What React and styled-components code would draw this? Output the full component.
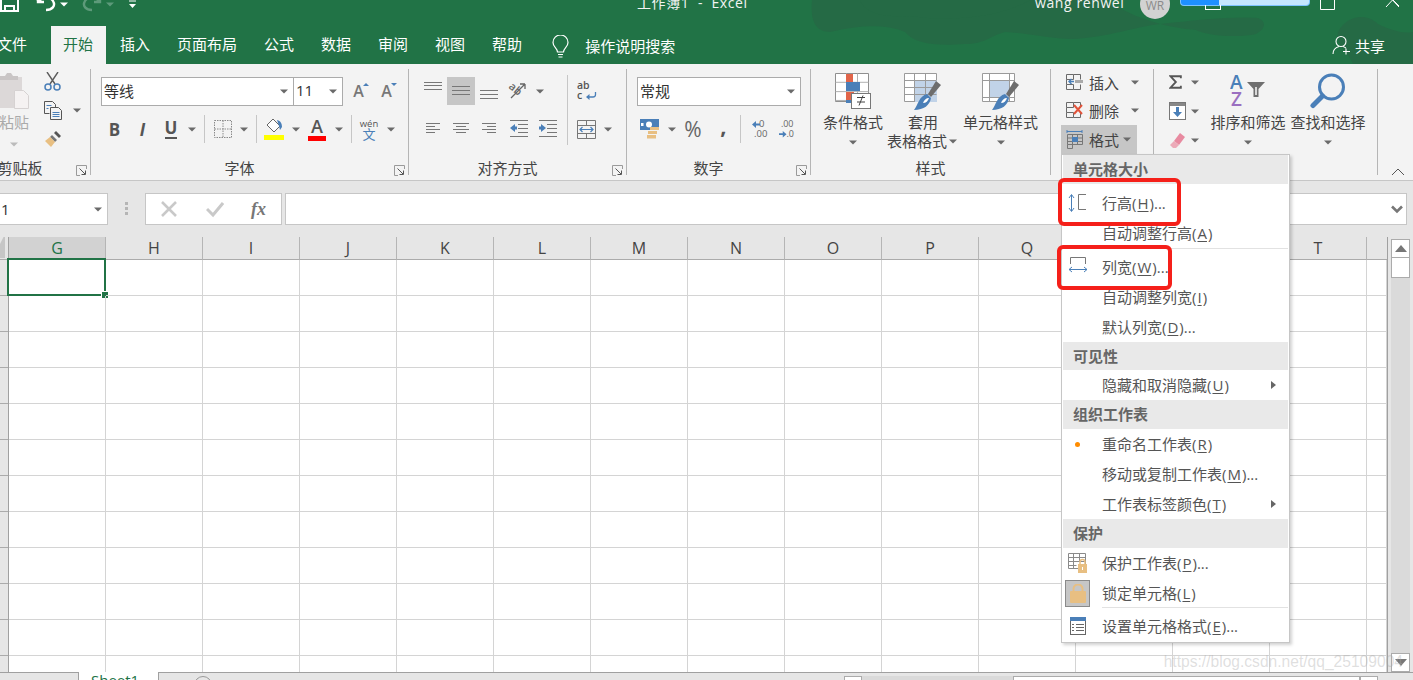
import React from 'react'
import styled, { createGlobalStyle } from 'styled-components'

const GlobalStyle = createGlobalStyle`
    html, body {
        margin: 0;
        width: 1413px;
        height: 680px;
        overflow: hidden;
        background: #e6e6e6;
    }
    * { box-sizing: border-box; }
    #root {
        font-family: "Open Sans", "Noto Sans CJK SC", sans-serif;
        font-size: 15px;
        color: #444;
    }
`

const GREY = '#6a6a6a'
const BLUE = '#4a7fb8'
const ORANGE = '#e8bf82'

/* ---------- icons ---------- */

const Caret = ({ w = 10, color = GREY }) => (
    <CaretSlot $w={w}>
        <svg width="8" height="5" viewBox="0 0 8 5"><path d="M0 0.5h8L4 4.5z" fill={color} /></svg>
    </CaretSlot>
)

const Launcher = () => (
    <svg width="11" height="11" viewBox="0 0 11 11" fill="none">
        <path d="M10.5 4V.5H.5v10H4" stroke="#9a9a9a" />
        <path d="M3.5 3.5L9 9M9.5 5.5v4h-4" stroke="#555" />
    </svg>
)

const SaveIcon = () => (
    <svg width="19" height="12" viewBox="0 0 19 12" fill="none" stroke="#fff" strokeWidth="2">
        <path d="M1 -6h17v17H1z" />
        <path d="M5 11V6h9v5" />
    </svg>
)

const UndoIcon = ({ color = '#fff' }) => (
    <svg width="22" height="12" viewBox="0 0 22 12" fill="none" stroke={color} strokeWidth="2.4">
        <path d="M2 1v-1M3 1c4-4 11-5 14 0s-1 9-7 9" />
        <path d="M2 -4v6h6" />
    </svg>
)

const RedoIcon = ({ color = '#5d9a7a' }) => (
    <svg width="22" height="12" viewBox="0 0 22 12" fill="none" stroke={color} strokeWidth="2.4">
        <path d="M19 1c-4-4-11-5-14 0s1 9 7 9" />
        <path d="M20 -4v6h-6" />
    </svg>
)

const CustomizeIcon = () => (
    <svg width="9" height="9" viewBox="0 0 9 9"><path d="M1 1h7" stroke="#fff" /><path d="M1 4h7L4.5 8z" fill="#fff" /></svg>
)

const BulbIcon = () => (
    <svg width="17" height="23" viewBox="0 0 17 23" fill="none" stroke="#fff" strokeWidth="1.2">
        <path d="M5.5 17c0-4-4.500-5-4.500-9.500a7.500 7.500 0 0 1 15 0C16 12 11.500 13 11.500 17z" />
        <path d="M6 19.500h5M6.500 22h4" />
    </svg>
)

const ShareIcon = () => (
    <svg width="19" height="20" viewBox="0 0 19 20" fill="none" stroke="#fff" strokeWidth="1.1">
        <circle cx="9" cy="6.500" r="5" />
        <path d="M1 19c0-4 2.500-6.500 6-7.500M11 11.500c1 .3 2 .8 2.800 1.500M14 13.500v6M11 16.500h7" />
    </svg>
)

const PasteIcon = () => (
    <svg width="32" height="38" viewBox="0 0 32 38">
        <rect x="0" y="5" width="24" height="31" fill="#dcd8d8" />
        <path d="M2 8V4h5l2-3h4l2 3h5v4z" fill="#c9c5c5" />
        <path d="M16.500 18.500h9l5 5v13h-14z" fill="#f5f2f2" stroke="#d6d2d2" />
    </svg>
)

const ScissorsIcon = () => (
    <svg width="17" height="19" viewBox="0 0 17 19" fill="none">
        <path d="M3 0l8 12M14 0L6 12" stroke="#5c5c5c" strokeWidth="1.400" />
        <circle cx="4" cy="15" r="3" stroke={BLUE} strokeWidth="1.500" />
        <circle cx="13" cy="15" r="3" stroke={BLUE} strokeWidth="1.500" />
    </svg>
)

const CopyIcon = () => (
    <svg width="18" height="19" viewBox="0 0 18 19" fill="none" stroke="#555">
        <path d="M.5.500h8l3 3v4M.5.500v12h5" />
        <path d="M6.500 6.500h8l3 3v9h-11z" fill="#f3f3f3" />
        <path d="M2.500 4.500h5M2.500 7.500h2M8.500 11.500h7M8.500 13.500h7M8.500 15.500h7" stroke={BLUE} />
    </svg>
)

const BrushIcon = () => (
    <svg width="18" height="18" viewBox="0 0 18 18">
        <path d="M10 3l2-2 5 5-2 2z" fill="#555" />
        <path d="M8 5l5 5-2 2-5-5z" fill="#777" />
        <path d="M6 7l5 5-4 5L1 11z" fill={ORANGE} />
    </svg>
)

const BordersIcon = () => (
    <svg width="18" height="18" viewBox="0 0 18 18" stroke="#8a8a8a" strokeDasharray="1.500 1" fill="none">
        <path d="M.5.500h17v17H.5zM.5 9h17M9 .5v17" />
    </svg>
)

const FillIcon = () => (
    <svg width="20" height="22" viewBox="0 0 20 22">
        <path d="M9 1l7 7-6 6-7-7z" fill="#fff" stroke="#666" />
        <path d="M13 2c4 1 5 4 5 7l-2 3-1-4z" fill={BLUE} />
        <rect y="17" width="20" height="5" fill="#ffff00" />
    </svg>
)

const WrapIcon = () => (
    <svg width="20" height="20" viewBox="0 0 20 20" fontFamily="Open Sans" fontSize="10.500" fontWeight="600" fill="#555">
        <text x="0" y="8">ab</text>
        <text x="0" y="18">c</text>
        <path d="M18.500 11v2.500c0 2-1 2.500-2.500 2.500h-6" fill="none" stroke={BLUE} strokeWidth="1.300" />
        <path d="M9 16l3.500-3v6z" fill={BLUE} />
    </svg>
)

const LineIcon = ({ w = 18, h = 28, lines, children }) => (
    <svg width={w} height={h} viewBox={`0 0 ${w} ${h}`} fill="none">
        {lines.map(([x1, x2, y]) => <path key={`${x1}-${y}`} d={`M${x1} ${y + 0.5}H${x2}`} stroke="#777" />)}
        {children}
    </svg>
)

const OrientIcon = () => (
    <svg width="22" height="20" viewBox="0 0 22 20" fill="none">
        <path d="M3 3l14 14M17 17v-5M17 17h-5" stroke="#666" strokeWidth="1.300" transform="rotate(-90 10 10)" />
        <text x="1" y="12" fontFamily="Open Sans" fontSize="11" fontWeight="600" fill="#666" transform="rotate(40 8 8)">ab</text>
    </svg>
)

const MergeIcon = () => (
    <svg width="19" height="19" viewBox="0 0 19 19" fill="none">
        <path d="M.5.500h18v18H.5zM.5 5.500h18M.5 13.500h18M9.500.5v5M9.500 13.500v5" stroke="#777" />
        <path d="M3 9.500h13M5.500 7L3 9.500 5.500 12M13.500 7l2.500 2.500-2.500 2.500" stroke={BLUE} strokeWidth="1.200" />
    </svg>
)

const AccountingIcon = () => (
    <svg width="20" height="20" viewBox="0 0 20 20">
        <rect y="0" width="19" height="11" fill={BLUE} />
        <circle cx="9" cy="5.500" r="3" fill="#fff" />
        <rect x="1" y="4" width="2.500" height="3" fill="#fff" />
        <path d="M10 8h9v3h-9zM8 12h9v3H8zM7 16h9v3.500H7z" fill={ORANGE} />
    </svg>
)

const DecimalIcon = ({ flip }) => (
    <svg width="17" height="20" viewBox="0 0 17 20" fontFamily="Open Sans" fontSize="9.500" fill="#666">
        <text x={flip ? 2 : 7} y="8">{flip ? '.00' : '0'}</text>
        <text x={flip ? 8 : 2} y="18">{flip ? '.0' : '.00'}</text>
        {flip
            ? <path d="M0 14.500h4V12l4 3.500L4 19v-2.500H0z" fill={BLUE} />
            : <path d="M8 4.500H4V2L0 5.500 4 9V6.500h4z" fill={BLUE} />}
    </svg>
)

const ConditionIcon = () => (
    <svg width="37" height="37" viewBox="0 0 37 37">
        <path d="M.5.500h33v28H.5z" fill="#fff" stroke="#8f8f8f" />
        <path d="M.5 9.500h33M.5 19h33M.5 28h33M11.500.5v30M22.500.5v30" stroke="#b0b0b0" transform="scale(1 .98)" />
        <path d="M11 1h7v8h-7zM11 19h8v8h-8z" fill="#e1654a" />
        <path d="M11 9h14v9H11zM11 27h6v3h-6z" fill={BLUE} />
        <rect x="16.500" y="20.500" width="19" height="15" fill="#fff" stroke="#777" />
        <path d="M22 24.500h8M22 29h8M28 22.500l-4 10" stroke="#444" />
    </svg>
)

const TableStyleIcon = ({ single }) => (
    <svg width="38" height="38" viewBox="0 0 38 38">
        <path d="M.5.500h32v28H.5z" fill="#fff" stroke="#9a9a9a" />
        {single
            ? <path d="M8 7h20v17H8z" fill="#c1d3e8" />
            : <path d="M11 7h22v22H11z" fill="#c1d3e8" />}
        {single
            ? <path d="M.5 7.500h32M.5 24.500h32M7.500.5v28M27.500.5v28" stroke="#9a9a9a" fill="none" />
            : <path d="M.5 7.500h32M.5 14.500h32M.5 21.500h32M10.500.5v28M21.500.5v28" stroke="#9a9a9a" fill="none" />}
        <path d="M32 8l5 4-10 12-3-3z" fill="#6d6d6d" />
        <path d="M23 21l4 4c-1 7-7 12-17 12 4-5 5-14 13-16z" fill={BLUE} />
        <path d="M19 30c1-3 3-5 6-5-1 3-3 5-6 5z" fill="#fff" />
    </svg>
)

const CellGrid = () => <path d="M.5.500h7v5h-7zM7.500.5h7v5M.5 5.500v5h7M.5 10.500v5h7v-5M7.500 15.500h7v-5" stroke="#6a6a6a" fill="none" />

const InsertIcon = () => (
    <svg width="18" height="18" viewBox="0 0 18 18">
        <g transform="translate(0 1)"><CellGrid /></g>
        <path d="M9 7h8v3H9z" fill="#aaa" />
        <path d="M8 8.500H3M5.500 6L3 8.500 5.500 11" stroke={BLUE} strokeWidth="1.400" fill="none" />
    </svg>
)

const DeleteIcon = () => (
    <svg width="18" height="18" viewBox="0 0 18 18">
        <g transform="translate(0 1)"><CellGrid /></g>
        <path d="M8 4l8 9M16 4l-8 9" stroke="#e2533a" strokeWidth="2" />
    </svg>
)

const FormatIcon = () => (
    <svg width="18" height="19" viewBox="0 0 18 19" fill="none">
        <path d="M1 1.500h15M1 0v3M16 0v3" stroke={BLUE} />
        <path d="M1.500 4.500h15v10h-15zM1.500 8h15M1.500 11.500h15M6.500 4.500v14h-5v-4M11.500 4.500v10" stroke="#777" />
        <rect x="6" y="7" width="6" height="5" fill={BLUE} />
    </svg>
)

const SigmaIcon = () => (
    <svg width="17" height="18" viewBox="0 0 17 18" fill="none">
        <path d="M15.500 4V1.500H2L9 9l-7 7.500h13.500V14" stroke="#555" strokeWidth="2.400" />
    </svg>
)

const FillDownIcon = () => (
    <svg width="17" height="18" viewBox="0 0 17 18">
        <rect x=".5" y=".5" width="16" height="17" fill="#fff" stroke="#777" />
        <rect x="1" y="1" width="15" height="3" fill="#888" />
        <path d="M7 5h3v5h3l-4.500 5L4 10h3z" fill={BLUE} />
    </svg>
)

const EraserIcon = () => (
    <svg width="17" height="17" viewBox="0 0 17 17">
        <path d="M11 1l5 4-6 8-5-4z" fill="#e88aa0" />
        <path d="M5 9l5 4-3 3H4l-3-3z" fill="#ecaab8" />
    </svg>
)

const SortIcon = () => (
    <svg width="36" height="37" viewBox="0 0 36 37" fontFamily="Open Sans" fontWeight="600" fontSize="19">
        <text x="0" y="16" fill={BLUE}>A</text>
        <text x="1" y="33" fill="#9a6fc0">Z</text>
        <path d="M17 9h18l-6.500 7v8h-5v-8z" fill="#6f6f6f" />
        <path d="M25 14h2v8h-2z" fill="#d9d9d9" />
    </svg>
)

const SearchIcon = () => (
    <svg width="36" height="36" viewBox="0 0 36 36" fill="none">
        <circle cx="21.500" cy="14" r="12" stroke={BLUE} strokeWidth="3" />
        <path d="M12.500 23L3 32.500" stroke={BLUE} strokeWidth="5" strokeLinecap="round" />
    </svg>
)

const RowHeightIcon = () => (
    <svg width="20" height="20" viewBox="0 0 20 20" fill="none">
        <path d="M3.500 2v16M1 5l2.500-3.500L6 5M1 15l2.500 3.500L6 15" stroke={BLUE} />
        <path d="M18 1.500H10.500v15H18" stroke="#777" />
    </svg>
)

const ColWidthIcon = () => (
    <svg width="20" height="20" viewBox="0 0 20 20" fill="none">
        <path d="M2.500 7V.5h15V7" stroke="#777" />
        <path d="M1 12.500h18M4 10l-3 2.500L4 15M16 10l3 2.500-3 2.500" stroke={BLUE} />
    </svg>
)

const ProtectIcon = () => (
    <svg width="20" height="20" viewBox="0 0 20 20" fill="none">
        <path d="M.5.500h17v15H.5zM.5 4.500h17M.5 8.500h17M.5 12.500h8M5.500.5v15M11.500.5v8" stroke="#8a8a8a" />
        <rect x="10" y="11" width="9" height="9" fill={ORANGE} />
        <path d="M12 11V9a2.500 2.500 0 0 1 5 0v2" stroke={ORANGE} strokeWidth="1.500" />
        <path d="M14.500 14v3" stroke="#fff" />
    </svg>
)

const LockIcon = () => (
    <svg width="16" height="19" viewBox="0 0 16 19" fill="none">
        <rect y="7" width="16" height="12" rx="1" fill={ORANGE} />
        <path d="M3.500 8V5a4.500 4.500 0 0 1 9 0v3" stroke={ORANGE} strokeWidth="2" />
    </svg>
)

const FormatCellsIcon = () => (
    <svg width="16" height="18" viewBox="0 0 16 18" fill="none">
        <rect x=".5" y=".5" width="15" height="17" stroke="#666" fill="#fff" />
        <rect width="16" height="4" fill={BLUE} />
        <path d="M2 7.500h2M6 7.500h8M2 10.500h2M6 10.500h8M2 13.500h2M6 13.500h8" stroke="#666" />
    </svg>
)

/* ---------- data ---------- */

const COLUMNS = ['G', 'H', 'I', 'J', 'K', 'L', 'M', 'N', 'O', 'P', 'Q', 'R', 'S', 'T', '']
const ROWS = Array.from({ length: 12 }, (_, i) => i)

const Item = ({ icon, arrow, label, hot, tail = '' }) => (
    <MenuItem>
        <MenuIcon>{icon}</MenuIcon>
        <span>{label}(<u>{hot}</u>){tail}</span>
        {arrow && <MenuArrow />}
    </MenuItem>
)

/* ---------- page ---------- */

function App() {
    return (
        <Page>
            <GlobalStyle />
            <Header>
                <HeaderArt viewBox="0 0 1413 64" width="1413" height="64">
                    <path d="M812 0c-2 20 3 32 18 32 30-7 55-8 75 0 10 12 30 14 60 12 20 0 25-8 40-12 35 2 55 10 80 6 35-4 45-10 75-14 35-4 75-8 98-6 10 4 6 12-2 16-16 4-50 2-60-4-25-2-60-10-90-30z" fill="#256a45" />
                    <path d="M860 0c5 12 20 18 50 16 40 6 90 2 120-16z" fill="#256a45" />
                    <path d="M1338 32c8-16 28-20 40-8 12 6 25 10 35 8v32h-60c-4-12-18-18-15-32z" fill="#256a45" />
                </HeaderArt>
                <TitleBar>
                    <QuickAccess>
                        <SaveIcon />
                        <QatItem $m={17}><UndoIcon /></QatItem>
                        <Caret w={12} color="#fff" />
                        <QatItem $m={10}><RedoIcon /></QatItem>
                        <QatItem $m={2}><Caret w={12} color="#5d9a7a" /></QatItem>
                        <QatItem $m={12}><CustomizeIcon /></QatItem>
                    </QuickAccess>
                    <ClippedText>工作簿1&nbsp; -&nbsp; Excel</ClippedText>
                    <AccountArea>
                        <UserName>wang renwei</UserName>
                        <Avatar>WR</Avatar>
                        <BlueBar />
                        <WindowButton>
                            <svg width="15" height="10" viewBox="0 0 15 10" fill="none"><path d="M.5 -2v11.500h14V-2" stroke="#fff" /></svg>
                        </WindowButton>
                        <WindowButton>
                            <svg width="15" height="8" viewBox="0 0 15 8" fill="none"><path d="M7.500 0L1 7M7.500 0L14 7M1 -7l13 13" stroke="#fff" /></svg>
                        </WindowButton>
                    </AccountArea>
                </TitleBar>
                <TabBar>
                    <FileTab>文件</FileTab>
                    <Tab $active>开始</Tab>
                    <Tab>插入</Tab>
                    <Tab>页面布局</Tab>
                    <Tab>公式</Tab>
                    <Tab>数据</Tab>
                    <Tab>审阅</Tab>
                    <Tab>视图</Tab>
                    <Tab>帮助</Tab>
                    <SearchHint><BulbIcon /><span>操作说明搜索</span></SearchHint>
                    <ShareButton><ShareIcon /><span>共享</span></ShareButton>
                </TabBar>
            </Header>

            <Ribbon>
                <Group $w={121}>
                    <ClipboardBody>
                        <PasteColumn>
                            <PasteIcon />
                            <PasteLabel>粘贴</PasteLabel>
                            <Caret w={32} color="#bbb" />
                        </PasteColumn>
                        <ClipTools>
                            <ScissorsIcon />
                            <ToolRow><CopyIcon /><Caret w={30} /></ToolRow>
                            <BrushIcon />
                        </ClipTools>
                    </ClipboardBody>
                    <Footer><FooterLabel>剪贴板</FooterLabel><LauncherSlot><Launcher /></LauncherSlot></Footer>
                </Group>

                <Group $w={318}>
                    <Stack>
                        <ToolRow>
                            <Combo $w={193}><span>等线</span><Caret /></Combo>
                            <Combo $w={49} $joined><span>11</span><Caret /></Combo>
                            <Tool $w={31}><SizeLetter>A<SizeMark $up /></SizeLetter></Tool>
                            <Tool $w={25}><SizeLetter>A<SizeMark /></SizeLetter></Tool>
                        </ToolRow>
                        <ToolRow>
                            <Tool $w={27}><StyleLetter $bold>B</StyleLetter></Tool>
                            <Tool $w={29}><StyleLetter $italic>I</StyleLetter></Tool>
                            <Tool $w={28}><StyleLetter $under>U</StyleLetter></Tool>
                            <Caret w={14} />
                            <Divider $m={5} />
                            <Tool $w={35}><BordersIcon /></Tool>
                            <Caret w={8} />
                            <Divider $m={8} />
                            <Tool $w={34}><FillIcon /></Tool>
                            <Caret w={10} />
                            <Tool $w={32}><ColorLetter>A</ColorLetter></Tool>
                            <Caret w={12} />
                            <Divider $m={6} />
                            <Tool $w={34}><PhoneticGlyph><small>wén</small><b>文</b></PhoneticGlyph></Tool>
                            <Caret w={10} />
                        </ToolRow>
                    </Stack>
                    <Footer><FooterLabel>字体</FooterLabel><LauncherSlot><Launcher /></LauncherSlot></Footer>
                </Group>

                <Group $w={218}>
                    <AlignBody>
                        <AlignColumn>
                            <ToolRow>
                                <Tool $w={28}><LineIcon lines={[[0, 18, 5], [0, 18, 8], [0, 18, 12]]} /></Tool>
                                <Tool $w={28} $on><LineIcon lines={[[0, 18, 9], [0, 18, 13], [0, 18, 17]]} /></Tool>
                                <Tool $w={28}><LineIcon lines={[[0, 18, 13], [0, 18, 17], [0, 18, 21]]} /></Tool>
                                <Tool $w={32}><OrientIcon /></Tool>
                                <Caret w={10} />
                            </ToolRow>
                            <ToolRow>
                                <Tool $w={28}><LineIcon w={14} lines={[[0, 14, 8], [0, 9, 11], [0, 14, 14], [0, 9, 17]]} /></Tool>
                                <Tool $w={28}><LineIcon w={16} lines={[[0, 16, 8], [3, 13, 11], [0, 16, 14], [3, 13, 17]]} /></Tool>
                                <Tool $w={28}><LineIcon w={14} lines={[[0, 14, 8], [5, 14, 11], [0, 14, 14], [5, 14, 17]]} /></Tool>
                                <Tool $w={32}>
                                    <LineIcon lines={[[0, 18, 5], [8, 18, 9], [8, 18, 13], [8, 18, 17], [0, 18, 21]]}>
                                        <path d="M0 13l5-4v2.500h2v3H5V17z" fill={BLUE} />
                                    </LineIcon>
                                </Tool>
                                <Tool $w={25}>
                                    <LineIcon lines={[[0, 18, 5], [8, 18, 9], [8, 18, 13], [8, 18, 17], [0, 18, 21]]}>
                                        <path d="M7 13L2 9v2.500H0v3h2V17z" fill={BLUE} />
                                    </LineIcon>
                                </Tool>
                            </ToolRow>
                        </AlignColumn>
                        <Divider $m={0} $tall />
                        <AlignColumn>
                            <ToolRow><Tool $w={38}><WrapIcon /></Tool></ToolRow>
                            <ToolRow><Tool $w={36}><MergeIcon /></Tool><Caret w={8} /></ToolRow>
                        </AlignColumn>
                    </AlignBody>
                    <Footer><FooterLabel>对齐方式</FooterLabel><LauncherSlot><Launcher /></LauncherSlot></Footer>
                </Group>

                <Group $w={184}>
                    <Stack>
                        <ToolRow><Combo $w={164}><span>常规</span><Caret /></Combo></ToolRow>
                        <ToolRow>
                            <Tool $w={26}><AccountingIcon /></Tool>
                            <Caret w={18} />
                            <Tool $w={24}><PercentGlyph>%</PercentGlyph></Tool>
                            <Tool $w={34}><CommaGlyph>,</CommaGlyph></Tool>
                            <Divider $m={1} />
                            <Tool $w={38}><DecimalIcon /></Tool>
                            <Tool $w={16}><DecimalIcon flip /></Tool>
                        </ToolRow>
                    </Stack>
                    <Footer><FooterLabel>数字</FooterLabel><LauncherSlot><Launcher /></LauncherSlot></Footer>
                </Group>

                <Group $w={240}>
                    <BigRow $pad={10}>
                        <BigButton $w={64}><BigIcon><ConditionIcon /></BigIcon><BigText>条件格式</BigText><Caret /></BigButton>
                        <BigButton $w={76}><BigIcon><TableStyleIcon /></BigIcon><BigText>套用</BigText><BigText>表格格式<Caret w={12} /></BigText></BigButton>
                        <BigButton $w={79}><BigIcon><TableStyleIcon single /></BigIcon><BigText>单元格样式</BigText><Caret /></BigButton>
                    </BigRow>
                    <Footer $plain><FooterLabel>样式</FooterLabel></Footer>
                </Group>

                <Group $w={103}>
                    <CellsColumn>
                        <CellsRow><InsertIcon /><span>插入</span><Caret w={32} /></CellsRow>
                        <CellsRow><DeleteIcon /><span>删除</span><Caret w={32} /></CellsRow>
                        <CellsRow $on><FormatIcon /><span>格式</span><Caret w={16} /></CellsRow>
                    </CellsColumn>
                </Group>

                <Group $w={224}>
                    <BigRow $pad={0}>
                        <EditColumn>
                            <ToolRow><SigmaIcon /><Caret w={26} /></ToolRow>
                            <ToolRow><FillDownIcon /><Caret w={18} /></ToolRow>
                            <ToolRow><EraserIcon /><Caret w={18} /></ToolRow>
                        </EditColumn>
                        <BigButton $w={80}><BigIcon><SortIcon /></BigIcon><BigText>排序和筛选</BigText><Caret /></BigButton>
                        <BigButton $w={80}><BigIcon><SearchIcon /></BigIcon><BigText>查找和选择</BigText><Caret /></BigButton>
                    </BigRow>
                </Group>

                <CollapseButton>
                    <svg width="14" height="8" viewBox="0 0 14 8" fill="none"><path d="M1 7l6-6 6 6" stroke="#555" /></svg>
                </CollapseButton>
            </Ribbon>

            <FormulaBar>
                <NameBox><span>1</span><Caret w={18} /></NameBox>
                <Grip />
                <FormulaButtons>
                    <svg width="18" height="18" viewBox="0 0 18 18" fill="none"><path d="M2 2l14 14M16 2L2 16" stroke="#c9c9c9" strokeWidth="2.600" /></svg>
                    <svg width="18" height="18" viewBox="0 0 18 18" fill="none"><path d="M1 9l6 6L17 3" stroke="#c9c9c9" strokeWidth="3" /></svg>
                    <FxGlyph>fx</FxGlyph>
                </FormulaButtons>
                <FormulaInput>
                    <svg width="14" height="9" viewBox="0 0 14 9" fill="none"><path d="M2 1.500l5 5 5-5" stroke="#777" strokeWidth="2.600" /></svg>
                </FormulaInput>
            </FormulaBar>

            <Workbook>
                <RowHeader>
                    <Corner />
                    {ROWS.map(r => <RowStub key={r} />)}
                </RowHeader>
                <Sheet>
                    <SheetGrid>
                        {COLUMNS.map((c, i) => <ColumnHead key={c || 'U'} $on={i === 0}>{c}</ColumnHead>)}
                        {ROWS.flatMap(r => COLUMNS.map((c, i) => (
                            <Cell key={`${r}-${i}`} $selected={r === 0 && i === 0} />
                        )))}
                    </SheetGrid>
                </Sheet>
                <VerticalScroll>
                    <ScrollButton>
                        <svg width="12" height="7" viewBox="0 0 12 7"><path d="M6 0l6 7H0z" fill="#777" /></svg>
                    </ScrollButton>
                    <ScrollThumb />
                    <ScrollTrack />
                    <ScrollButton>
                        <svg width="12" height="7" viewBox="0 0 12 7"><path d="M0 0h12L6 7z" fill="#777" /></svg>
                    </ScrollButton>
                </VerticalScroll>
            </Workbook>

            <SheetBar>
                <SheetTab>Sheet1</SheetTab>
                <AddSheet />
                <HScroll>
                    <HScrollEnd />
                    <HScrollTrack />
                    <HScrollThumb />
                    <HScrollEnd />
                </HScroll>
            </SheetBar>

            <Menu>
                <MenuHead>单元格大小</MenuHead>
                <MenuSection $top={4}>
                    <Item icon={<RowHeightIcon />} label="行高" hot="H" tail="..." />
                    <Item label="自动调整行高" hot="A" />
                </MenuSection>
                <MenuRule />
                <MenuSection $top={3}>
                    <Item icon={<ColWidthIcon />} label="列宽" hot="W" tail="..." />
                    <Item label="自动调整列宽" hot="I" />
                    <Item label="默认列宽" hot="D" tail="..." />
                </MenuSection>
                <MenuHead $h={28}>可见性</MenuHead>
                <Item label="隐藏和取消隐藏" hot="U" arrow />
                <MenuHead>组织工作表</MenuHead>
                <Item icon={<OrangeDot />} label="重命名工作表" hot="R" />
                <Item label="移动或复制工作表" hot="M" tail="..." />
                <Item label="工作表标签颜色" hot="T" arrow />
                <MenuHead>保护</MenuHead>
                <Item icon={<ProtectIcon />} label="保护工作表" hot="P" tail="..." />
                <Item icon={<LockBox><LockIcon /></LockBox>} label="锁定单元格" hot="L" />
                <MenuRule $inset />
                <MenuSection $top={3}>
                    <Item icon={<FormatCellsIcon />} label="设置单元格格式" hot="E" tail="..." />
                </MenuSection>
            </Menu>

            <RedFrame $x={1058} $y={178} $w={123} $h={48} />
            <RedFrame $x={1057} $y={245} $w={115} $h={45} />
            <Watermark>https://blog.csdn.net/qq_25109004</Watermark>
        </Page>
    )
}

export default App

/* ---------- styles ---------- */

const Page = styled.div`
    position: relative;
    width: 1413px;
    height: 680px;
    overflow: hidden;
    background: #e6e6e6;
`

const Header = styled.header`
    position: relative;
    height: 64px;
    background: #217346;
    color: #fff;
    overflow: hidden;
`

const HeaderArt = styled.svg`
    position: absolute;
    inset: 0;
`

const TitleBar = styled.div`
    position: relative;
    display: flex;
    align-items: flex-start;
    height: 24px;
    overflow: hidden;
`

const QuickAccess = styled.div`
    display: flex;
    align-items: flex-start;
    width: 637px;
    flex: none;
    & > span { height: 8px; }
`

const QatItem = styled.div`
    display: flex;
    align-items: flex-start;
    margin-left: ${p => p.$m}px;
    span { height: 8px; }
`

const ClippedText = styled.span`
    margin-top: -7px;
    line-height: 20px;
    font-size: 14px;
    letter-spacing: .6px;
    white-space: nowrap;
    color: #f3f3f3;
`

const UserName = styled(ClippedText)`
    flex: none;
    width: 92px;
`

const AccountArea = styled.div`
    display: flex;
    align-items: flex-start;
    position: absolute;
    left: 1035px;
    top: 0;
`

const Avatar = styled.div`
    flex: none;
    width: 30px;
    height: 30px;
    margin: -11px 0 0 13px;
    padding-top: 9px;
    border-radius: 50%;
    background: #d2d2d2;
    color: #8b8b8b;
    font-size: 12px;
    line-height: 16px;
    text-align: center;
`

const BlueBar = styled.div`
    position: relative;
    flex: none;
    width: 130px;
    height: 6px;
    margin-left: 10px;
    border-radius: 0 0 4px 4px;
    background: linear-gradient(90deg, #1e90ff 0 38px, #c4e6ff 38px);
    border: 1px solid #7cc2ff;
    border-top: 0;
    &::after {
        content: '';
        position: absolute;
        left: 24px;
        top: 5px;
        width: 14px;
        height: 4px;
        border: 1px solid #fff;
        border-top: 0;
    }
`

const WindowButton = styled.div`
    display: flex;
    flex: none;
    margin-left: 10px;
    width: 15px;
    & + & { margin-left: 50px; }
`

const TabBar = styled.nav`
    position: relative;
    display: flex;
    align-items: flex-end;
    height: 40px;
`

const Tab = styled.div`
    height: 38px;
    margin: 0 1px;
    padding: 0 13px 0 12px;
    line-height: 36px;
    white-space: nowrap;
    color: ${p => (p.$active ? '#217346' : '#fff')};
    background: ${p => (p.$active ? '#f3f3f3' : 'transparent')};
`

const FileTab = styled(Tab)`
    margin: 0 0 0 -3px;
    padding: 0 23px 0 0;
    width: 53px;
`

const SearchHint = styled.div`
    display: flex;
    align-items: center;
    gap: 16px;
    height: 38px;
    margin-left: 16px;
    white-space: nowrap;
    svg { margin-top: 2px; }
`

const ShareButton = styled.div`
    display: flex;
    align-items: center;
    gap: 4px;
    height: 38px;
    margin-left: auto;
    margin-right: 28px;
    white-space: nowrap;
`

const Ribbon = styled.div`
    display: flex;
    align-items: flex-start;
    height: 117px;
    padding-top: 5px;
    background: #f3f3f3;
    border-bottom: 1px solid #c6c6c6;
`

const Group = styled.section`
    display: flex;
    flex-direction: column;
    flex: none;
    width: ${p => p.$w}px;
    height: 106px;
    border-right: 1px solid #b5b5b5;
    &:first-child { margin-left: -30px; }
`

const Footer = styled.div`
    display: flex;
    height: 12px;
    margin-top: auto;
    align-items: center;
    color: #444;
`

const FooterLabel = styled.div`
    flex: 1;
    text-align: center;
    line-height: 10px;
    padding-bottom: 2px;
    white-space: nowrap;
`

const LauncherSlot = styled.div`
    display: flex;
    align-items: center;
    justify-content: flex-start;
    width: 20px;
    padding-left: 6px;
    margin-top: 3px;
`

const CaretSlot = styled.span`
    display: inline-flex;
    align-items: center;
    justify-content: center;
    flex: none;
    width: ${p => p.$w}px;
    height: 20px;
`

const ClipboardBody = styled.div`
    display: flex;
    height: 94px;
    padding-left: 28px;
`

const PasteColumn = styled.div`
    display: flex;
    flex-direction: column;
    width: 40px;
    padding-top: 3px;
`

const PasteLabel = styled.div`
    width: 32px;
    line-height: 24px;
    color: #aaa;
    text-align: center;
`

const ClipTools = styled.div`
    display: flex;
    flex-direction: column;
    gap: 10px;
    padding: 3px 0 0 14px;
`

const Stack = styled.div`
    display: flex;
    flex-direction: column;
    gap: 10px;
    height: 94px;
    padding: 8px 0 0 10px;
`

const ToolRow = styled.div`
    display: flex;
    align-items: center;
    height: 28px;
    ${ClipTools} & { height: 19px; }
`

const Tool = styled.div`
    display: flex;
    align-items: center;
    justify-content: center;
    flex: none;
    width: ${p => p.$w}px;
    height: 28px;
    background: ${p => (p.$on ? '#c6c6c6' : 'transparent')};
`

const Combo = styled.div`
    display: flex;
    align-items: center;
    justify-content: space-between;
    flex: none;
    width: ${p => p.$w}px;
    height: 29px;
    padding: 0 4px 2px 2px;
    background: #fff;
    border: 1px solid #ababab;
    border-left-width: ${p => (p.$joined ? 0 : 1)}px;
    color: #333;
    & > span:last-child { margin-top: 2px; }
`

const Divider = styled.div`
    flex: none;
    width: 1px;
    height: ${p => (p.$tall ? 70 : 28)}px;
    margin-left: ${p => p.$m}px;
    background: #c6c6c6;
`

const SizeLetter = styled.span`
    position: relative;
    font-size: 16px;
    font-weight: 600;
    color: #777;
`

const SizeMark = styled.i`
    position: absolute;
    right: -5px;
    top: 3px;
    border: 3.5px solid transparent;
    border-bottom-color: ${p => (p.$up ? BLUE : 'transparent')};
    border-top-color: ${p => (p.$up ? 'transparent' : BLUE)};
    margin-top: ${p => (p.$up ? -3 : 0)}px;
`

const StyleLetter = styled.span`
    font-size: 17px;
    font-family: "Open Sans", sans-serif;
    font-weight: 700;
    font-style: ${p => (p.$italic ? 'italic' : 'normal')};
    color: #555;
    ${p => p.$under && 'border-bottom: 2px solid #555; line-height: 18px;'}
`

const ColorLetter = styled.span`
    font-size: 18px;
    font-weight: 600;
    line-height: 19px;
    color: #555;
    border-bottom: 5px solid #f00;
    padding: 0 3px;
`

const PhoneticGlyph = styled.span`
    display: flex;
    flex-direction: column;
    align-items: center;
    line-height: 11px;
    small { font-size: 9.5px; color: #555; }
    b { font-size: 13px; font-weight: 400; color: ${BLUE}; }
`

const AlignBody = styled.div`
    display: flex;
    height: 94px;
    padding-left: 10px;
    align-items: flex-start;
    ${Divider} { margin-top: 6px; }
`

const AlignColumn = styled.div`
    display: flex;
    flex-direction: column;
    gap: 10px;
    padding-top: 8px;
    &:first-child { width: 148px; }
`

const PercentGlyph = styled.span`
    font-size: 21px;
    line-height: 26px;
    color: #666;
`

const CommaGlyph = styled.span`
    font-size: 22px;
    font-weight: 700;
    line-height: 12px;
    margin: 0 0 8px 3px;
    color: #555;
`

const BigRow = styled.div`
    display: flex;
    height: 94px;
    padding: 4px 0 0 ${p => p.$pad}px;
`

const BigButton = styled.div`
    display: flex;
    flex-direction: column;
    align-items: center;
    flex: none;
    width: ${p => p.$w}px;
    white-space: nowrap;
`

const BigIcon = styled.div`
    display: flex;
    height: 37px;
    margin-bottom: 3px;
`

const BigText = styled.div`
    display: flex;
    align-items: center;
    height: 19px;
    line-height: 19px;
`

const CellsColumn = styled.div`
    display: flex;
    flex-direction: column;
    gap: 2px;
    width: 76px;
    margin-left: 10px;
`

const CellsRow = styled.div`
    display: flex;
    align-items: center;
    gap: 5px;
    height: ${p => (p.$on ? 29 : 26)}px;
    padding-left: 5px;
    background: ${p => (p.$on ? '#c6c6c6' : 'transparent')};
    white-space: nowrap;
    & > * { flex: none; }
    & > span:last-child { margin-left: -5px; }
`

const EditColumn = styled.div`
    display: flex;
    flex-direction: column;
    gap: 1px;
    width: 54px;
    padding-left: 15px;
    margin-top: -5px;
    ${ToolRow} { height: 28px; }
`

const CollapseButton = styled.div`
    display: flex;
    align-self: flex-end;
    padding: 0 0 4px 13px;
`

const FormulaBar = styled.div`
    display: flex;
    align-items: flex-start;
    height: 56px;
    padding-top: 12px;
`

const NameBox = styled.div`
    display: flex;
    align-items: center;
    justify-content: space-between;
    width: 112px;
    height: 32px;
    margin-left: -4px;
    padding-left: 4px;
    background: #fff;
    border: 1px solid #c6c6c6;
    color: #333;
`

const Grip = styled.div`
    width: 3px;
    height: 13px;
    margin: 9px 17px 0 17px;
    background: repeating-linear-gradient(#b5b5b5 0 3px, transparent 3px 5px);
`

const FormulaButtons = styled.div`
    display: flex;
    align-items: center;
    justify-content: space-between;
    width: 137px;
    height: 32px;
    padding: 0 15px 0 14px;
    background: #fff;
    border: 1px solid #c6c6c6;
`

const FxGlyph = styled.span`
    font-family: "Liberation Serif", serif;
    font-style: italic;
    font-weight: 700;
    font-size: 18px;
    color: #777;
`

const FormulaInput = styled.div`
    display: flex;
    align-items: center;
    justify-content: flex-end;
    flex: none;
    width: 1122px;
    height: 32px;
    margin-left: 3px;
    padding-right: 2px;
    background: #fff;
    border: 1px solid #c6c6c6;
`

const Workbook = styled.div`
    display: flex;
    height: 435px;
    overflow: hidden;
`

const RowHeader = styled.div`
    flex: none;
    width: 9px;
    height: 100%;
    overflow: hidden;
    border-right: 1px solid #a0a0a0;
`

const Corner = styled.div`
    height: 23px;
    border-bottom: 1px solid #ababab;
    position: relative;
    &::after {
        content: '';
        position: absolute;
        right: 3px;
        bottom: 1px;
        border: 8px solid transparent;
        border-right-color: #c6c6c6;
        border-bottom-color: #c6c6c6;
        border-left-width: 0;
        border-top-width: 16px;
    }
`

const RowStub = styled.div`
    height: 36px;
    border-bottom: 1px solid #ababab;
`

const Sheet = styled.div`
    flex: none;
    width: 1379px;
    height: 100%;
    background: #fff;
    border-right: 1px solid #a0a0a0;
`

const SheetGrid = styled.div`
    display: grid;
    grid-template-columns: repeat(14, 97px) 1fr;
    grid-auto-rows: 36px;
    grid-template-rows: 23px;
`

const ColumnHead = styled.div`
    display: flex;
    align-items: center;
    justify-content: center;
    background: ${p => (p.$on ? '#d2d2d2' : '#e6e6e6')};
    border-right: 1px solid #b5b5b5;
    border-bottom: 1px solid ${p => (p.$on ? '#217346' : '#ababab')};
    color: ${p => (p.$on ? '#217346' : '#444')};
    font-size: 16px;
    padding-bottom: 1px;
    &:nth-child(15) { border-right: 0; }
`

const Cell = styled.div`
    position: relative;
    border-right: 1px solid #d4d4d4;
    border-bottom: 1px solid #d4d4d4;
    ${p => p.$selected && `
        &::before {
            content: '';
            position: absolute;
            inset: -2px -1px -1px -2px;
            border: 2px solid #217346;
        }
        &::after {
            content: '';
            position: absolute;
            right: -3px;
            bottom: -3px;
            width: 6px;
            height: 6px;
            background: #217346;
            border: 1px solid #fff;
            box-sizing: content-box;
            margin: -1px;
        }
    `}
`

const VerticalScroll = styled.div`
    display: flex;
    flex-direction: column;
    flex: none;
    width: 19px;
    height: 100%;
    margin-left: 3px;
    padding-top: 2px;
`

const ScrollButton = styled.div`
    display: flex;
    align-items: center;
    justify-content: center;
    flex: none;
    height: 19px;
    background: #fff;
    border: 1px solid #ababab;
`

const ScrollThumb = styled.div`
    flex: none;
    height: 20px;
    background: #fff;
    border: 1px solid #ababab;
    border-top: 0;
`

const ScrollTrack = styled.div`
    flex: 1;
    background: #dadada;
`

const SheetBar = styled.div`
    display: flex;
    align-items: flex-start;
    height: 8px;
    border-top: 1px solid #a0a0a0;
    overflow: visible;
`

const SheetTab = styled.div`
    width: 81px;
    height: 12px;
    margin: -1px 0 0 78px;
    padding-left: 12px;
    background: #fff;
    border-left: 1px solid #a0a0a0;
    border-right: 1px solid #a0a0a0;
    color: #217346;
    font-size: 15px;
    line-height: 12px;
    padding-top: 2px;
    overflow: hidden;
`

const AddSheet = styled.div`
    width: 18px;
    height: 18px;
    margin: 3px 0 0 35px;
    border: 1px solid #999;
    border-radius: 50%;
`

const HScroll = styled.div`
    display: flex;
    height: 8px;
    margin-left: 632px;
    margin-top: 3px;
`

const HScrollEnd = styled.div`
    width: 18px;
    background: #fff;
    border: 1px solid #ababab;
`

const HScrollTrack = styled.div`
    width: 151px;
    background: #dadada;
`

const HScrollThumb = styled.div`
    width: 347px;
    background: #fff;
    border: 1px solid #ababab;
`

const Menu = styled.div`
    position: absolute;
    left: 1061px;
    top: 154px;
    width: 229px;
    height: 489px;
    padding: 0 1px;
    background: #fff;
    border: 1px solid #c6c6c6;
    box-shadow: 2px 2px 3px rgba(0, 0, 0, .18);
    color: #555;
`

const MenuHead = styled.div`
    height: ${p => p.$h || 29}px;
    padding-left: 10px;
    background: #e9e9e9;
    color: #666;
    font-weight: 700;
    line-height: 28px;
`

const MenuSection = styled.div`
    padding-top: ${p => p.$top}px;
`

const MenuItem = styled.div`
    display: flex;
    align-items: center;
    height: 30px;
    line-height: 28px;
    white-space: nowrap;
    u { text-underline-offset: 2px; margin: 0 1px; }
`

const MenuIcon = styled.div`
    display: flex;
    align-items: center;
    justify-content: center;
    flex: none;
    width: 39px;
    padding-right: 10px;
`

const MenuArrow = styled.i`
    margin-left: auto;
    margin-right: 12px;
    border: 4px solid transparent;
    border-left: 5px solid #666;
    border-right: 0;
`

const MenuRule = styled.div`
    height: 1px;
    margin-left: ${p => (p.$inset ? 39 : 0)}px;
    margin-top: ${p => (p.$inset ? -1 : 0)}px;
    position: relative;
    background: #e2e2e2;
`

const OrangeDot = styled.span`
    width: 5px;
    height: 5px;
    border-radius: 50%;
    background: #ff8c00;
`

const LockBox = styled.div`
    display: flex;
    align-items: center;
    justify-content: center;
    width: 25px;
    height: 27px;
    background: #c6c6c6;
    border: 1px solid #8a8a8a;
`

const RedFrame = styled.div`
    position: absolute;
    left: ${p => p.$x}px;
    top: ${p => p.$y}px;
    width: ${p => p.$w}px;
    height: ${p => p.$h}px;
    border: 4px solid #f5201a;
    border-radius: 6px;
`

const Watermark = styled.div`
    position: absolute;
    right: 10px;
    top: 652px;
    font-family: "Liberation Sans", sans-serif;
    font-size: 15.6px;
    line-height: 20px;
    color: rgba(170, 170, 170, .38);
    white-space: nowrap;
`
